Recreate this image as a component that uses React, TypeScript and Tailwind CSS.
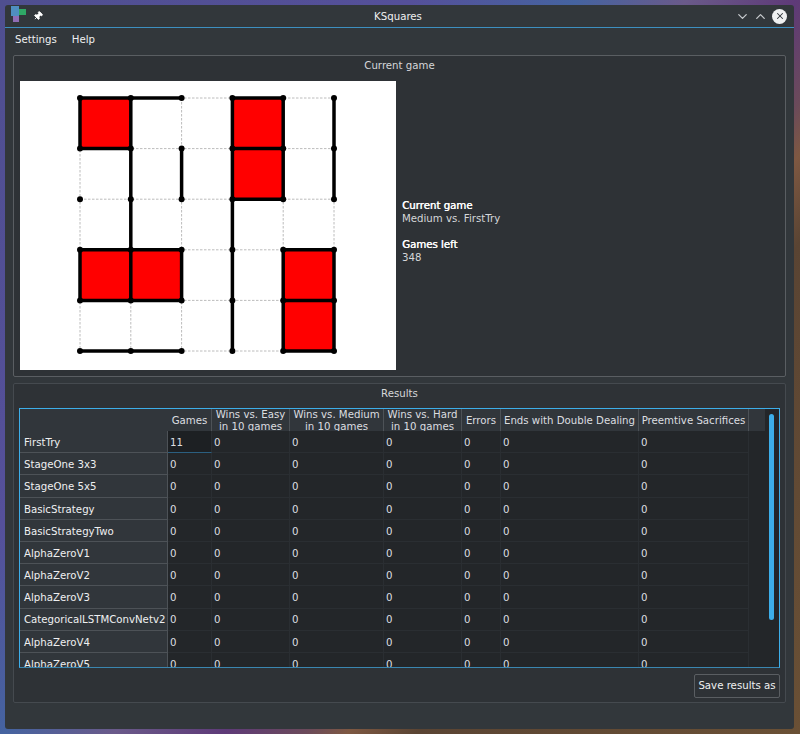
import { ChevronDown, ChevronUp, Pin, X } from "lucide-react";

const STEP_X = 50.8;
const STEP_Y = 50.6;
const X0 = 60;
const Y0 = 17;

const RED_BOXES = [
  [0, 0], [3, 0], [3, 1], [0, 3], [1, 3], [4, 3], [4, 4],
];

// x, y, length in cells
const H_LINES = [
  [0, 0, 2], [3, 0, 1], [0, 1, 1], [3, 1, 1], [3, 2, 1],
  [0, 3, 2], [4, 3, 1], [0, 4, 2], [4, 4, 1], [0, 5, 2], [4, 5, 1],
];
const V_LINES = [
  [0, 0, 1], [0, 3, 1], [1, 0, 4], [2, 1, 1], [2, 3, 1], [3, 0, 5],
  [4, 0, 2], [4, 3, 2], [5, 0, 2], [5, 3, 2],
];

const COLUMNS = [
  { label: ["Games"], w: "w-[44px]" },
  { label: ["Wins vs. Easy", "in 10 games"], w: "w-[78px]" },
  { label: ["Wins vs. Medium", "in 10 games"], w: "w-[94px]" },
  { label: ["Wins vs. Hard", "in 10 games"], w: "w-[78px]" },
  { label: ["Errors"], w: "w-[39px]" },
  { label: ["Ends with Double Dealing"], w: "w-[138px]" },
  { label: ["Preemtive Sacrifices"], w: "w-[110px]" },
];

const ROWS = [
  "FirstTry", "StageOne 3x3", "StageOne 5x5", "BasicStrategy", "BasicStrategyTwo",
  "AlphaZeroV1", "AlphaZeroV2", "AlphaZeroV3", "CategoricalLSTMConvNetv2",
  "AlphaZeroV4", "AlphaZeroV5",
];

function Board() {
  const px = (i: number) => X0 + i * STEP_X;
  const py = (i: number) => Y0 + i * STEP_Y;
  const idx = [0, 1, 2, 3, 4, 5];
  return (
    <svg width="376" height="289" className="block bg-white shrink-0">
      {RED_BOXES.map(([x, y]) => (
        <rect key={`${x}-${y}`} x={px(x)} y={py(y)} width={STEP_X} height={STEP_Y} fill="#ff0000" />
      ))}
      {idx.map((i) => (
        <g key={i} stroke="#bcbcbc" strokeWidth="1" strokeDasharray="2.5 1.5">
          <line x1={px(0)} y1={py(i)} x2={px(5)} y2={py(i)} />
          <line x1={px(i)} y1={py(0)} x2={px(i)} y2={py(5)} />
        </g>
      ))}
      {H_LINES.map(([x, y, n]) => (
        <line key={`h${x}-${y}`} x1={px(x)} y1={py(y)} x2={px(x + n)} y2={py(y)} stroke="#000" strokeWidth="3.5" />
      ))}
      {V_LINES.map(([x, y, n]) => (
        <line key={`v${x}-${y}`} x1={px(x)} y1={py(y)} x2={px(x)} y2={py(y + n)} stroke="#000" strokeWidth="3.5" />
      ))}
      {idx.map((y) =>
        idx.map((x) => <circle key={`${x}:${y}`} cx={px(x)} cy={py(y)} r="3" fill="#000" />)
      )}
    </svg>
  );
}

function ResultsTable() {
  return (
    <div className="flex h-[260px] border border-[#3daee9] border-b-[#3a86b0] overflow-hidden bg-[#232629]">
      <div className="flex-1 min-w-0 overflow-hidden">
        <div className="flex h-[22px] bg-[#31363b]">
          <div className="w-[148px] shrink-0" />
          {COLUMNS.map((c) => (
            <div
              key={c.label[0]}
              className={`${c.w} shrink-0 border-r border-[#4d5257] flex flex-col items-center justify-center pt-[1px] text-center leading-[12px] whitespace-nowrap overflow-hidden text-[#dcdee0]`}
            >
              {c.label.map((l) => (
                <span key={l}>{l}</span>
              ))}
            </div>
          ))}
          <div className="w-[15px] shrink-0" />
        </div>
        {ROWS.map((name, r) => (
          <div key={name} className="flex h-[22.2px]">
            <div className="w-[148px] shrink-0 bg-[#31363b] border-b border-[#4d5257] border-r flex items-center pl-[4px] pt-[2px] whitespace-nowrap overflow-hidden">
              {name}
            </div>
            {COLUMNS.map((c, i) => (
              <div
                key={c.label[0]}
                className={`${c.w} shrink-0 flex items-center pl-[2px] pt-[2px] border-r border-b border-[#2a2e32] text-[#dcdee0] ${
                  r === 0 && i === 0 ? "border-b-[#2b5f80] bg-[#1d2023]" : ""
                }`}
              >
                {r === 0 && i === 0 ? "11" : "0"}
              </div>
            ))}
          </div>
        ))}
      </div>
      <div className="w-[14px] shrink-0 pt-[5px] pl-[4px] pr-[5px]">
        <div className="h-[206px] rounded-full bg-[#3daee9]" />
      </div>
    </div>
  );
}

export default function App() {
  return (
    <div
      className="w-[800px] h-[734px] overflow-hidden p-[5px] text-[10.2px] text-[#eff0f1] bg-[linear-gradient(128deg,#4f4f90_0%,#55509a_30%,#4563a0_42%,#6a5a8a_50%,#5e3a78_58%,#6b4a5a_64%,#7e5842_67%,#5a4433_72%,#6a5035_100%)]"
      style={{ fontFamily: '"DejaVu Sans", sans-serif' }}
    >
      <div className="h-[724px] w-[789px] rounded-[3px] bg-[#32373b] flex flex-col">
        {/* Title bar */}
        <div className="h-[23px] shrink-0 flex items-center border-b border-[#3d8fc0] pl-[6px] pr-[7px]">
          <svg width="16" height="18" viewBox="0 0 16 18" className="shrink-0 mt-[-2px]">
            <rect x="7" y="3" width="8" height="6" fill="#2fa866" />
            <rect x="2" y="9" width="6" height="7" fill="#8f6db5" />
            <rect x="0" y="0" width="8" height="10" fill="#4f8fc0" />
          </svg>
          <Pin size={10} className="ml-[6px] rotate-45 text-white fill-white" />
          <div className="flex-1 text-center pt-[1px] pl-[18px] text-[#eff0f1]">KSquares</div>
          <ChevronDown size={15} className="text-[#c8cbce]" />
          <ChevronUp size={15} className="ml-[3px] text-[#c8cbce]" />
          <div className="ml-[4px] w-[15px] h-[15px] rounded-full bg-[#eff0f1] flex items-center justify-center">
            <X size={10} strokeWidth={2.5} className="text-[#31363b]" />
          </div>
        </div>

        {/* Menu */}
        <div className="h-[22px] shrink-0 flex items-center gap-[15px] pl-[10px] pt-[1px] text-[#eff0f1]">
          <span>Settings</span>
          <span>Help</span>
        </div>

        <div className="flex-1 flex flex-col px-[8px] pt-[5px] gap-[6px]">
          {/* Current game */}
          <div className="h-[322px] border border-[#5a5e62] rounded-[2px] bg-[#2e3236] flex flex-col">
            <div className="h-[25px] shrink-0 text-center leading-[20px] text-[#d5d7d9]">Current game</div>
            <div className="flex items-center pl-[6px] gap-[6px]">
              <Board />
              <div className="leading-[13px] mt-[12px]">
                <div className="text-white [text-shadow:0.4px_0_0_#ffffff]">Current game</div>
                <div className="text-[#d5d7d9]">Medium vs. FirstTry</div>
                <div className="text-white mt-[13px] [text-shadow:0.4px_0_0_#ffffff]">Games left</div>
                <div className="text-[#d5d7d9]">348</div>
              </div>
            </div>
          </div>

          {/* Results */}
          <div className="h-[320px] border border-[#454a4f] rounded-[2px] bg-[#2e3236] flex flex-col px-[5px]">
            <div className="h-[24px] shrink-0 text-center leading-[20px] text-[#d5d7d9]">Results</div>
            <ResultsTable />
            <div className="flex justify-end mt-[6px]">
              <button className="h-[24px] w-[86px] border border-[#5a5e62] rounded-[2px] text-[#eff0f1] whitespace-nowrap">
                Save results as
              </button>
            </div>
          </div>
        </div>
      </div>
    </div>
  );
}
